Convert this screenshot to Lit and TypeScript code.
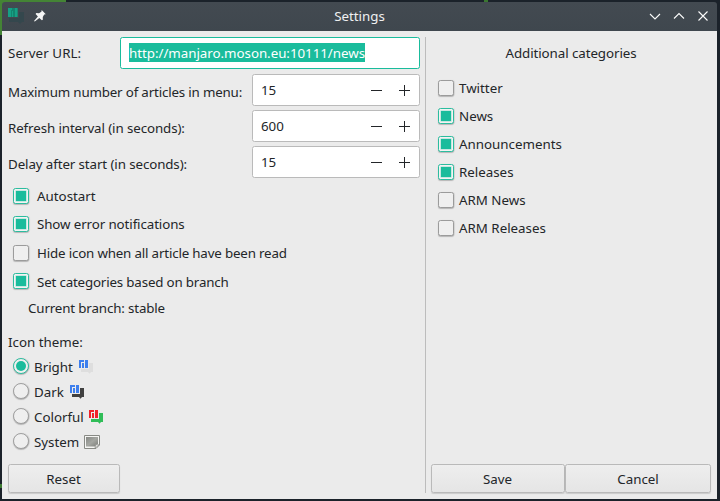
import { LitElement, html, css } from "lit";
import { customElement, property } from "lit/decorators.js";

@customElement("check-item")
class CheckItem extends LitElement {
  @property() label = "";
  @property({ type: Boolean }) checked = false;
  static styles = css`
    :host { display: flex; align-items: center; }
    .box {
      box-sizing: border-box; width: 16px; height: 16px; flex: none;
      border: 1px solid #9b9b9b; border-radius: 2.5px; background: #efefef;
      box-shadow: 0 1px 1px rgba(0, 0, 0, 0.22), 1px 0 1px rgba(0, 0, 0, 0.08);
      display: grid; place-items: center;
    }
    .on { border-color: #2bbd9f; background: #f3f3f3; }
    .on::after { content: ""; width: 10px; height: 10px; background: #1abc9c; box-shadow: 0 0 0 0.5px rgba(26, 188, 156, 0.4); }
    .text { margin-left: var(--gap, 5px); white-space: nowrap; transform: translateY(var(--drop, 0)); }
  `;
  render() {
    return html`<span class="box ${this.checked ? "on" : ""}"></span><span class="text">${this.label}</span>`;
  }
}

@customElement("radio-item")
class RadioItem extends LitElement {
  @property() label = "";
  @property({ type: Boolean }) checked = false;
  static styles = css`
    :host { display: flex; align-items: center; height: 25px; }
    .ring {
      box-sizing: border-box; width: 16px; height: 16px; flex: none; border-radius: 50%;
      border: 1px solid #a0a0a0; background: #efefef;
      box-shadow: 0 1px 1px rgba(0, 0, 0, 0.22), 1px 0 1px rgba(0, 0, 0, 0.1);
      display: grid; place-items: center;
    }
    .on { border-color: #2bbd9f; }
    .on::after { content: ""; width: 10px; height: 10px; border-radius: 50%; background: #1abc9c; }
    .text { margin: 2px 0 0 5px; width: var(--label-width); white-space: nowrap; }
    ::slotted(*) { margin-top: 3px; }
  `;
  render() {
    return html`<span class="ring ${this.checked ? "on" : ""}"></span><span class="text">${this.label}</span><slot></slot>`;
  }
}

@customElement("spin-box")
class SpinBox extends LitElement {
  @property() value = "";
  static styles = css`
    :host {
      display: flex; align-items: center; box-sizing: border-box; width: 168px; height: 32px; letter-spacing: 0;
      background: #fff; border: 1px solid #bababa; border-radius: 2.5px; padding: 0 8px;
    }
    span { flex: 1; }
    svg { display: block; }
    .minus { margin-right: 16px; }
  `;
  render() {
    return html`<span>${this.value}</span>
      <svg class="minus" width="12" height="12" shape-rendering="crispEdges"><path d="M0 6h11v1H0z" fill="#232629" /></svg>
      <svg width="12" height="12" shape-rendering="crispEdges"><path d="M0 6h11v1H0zM5 1h1v11H5z" fill="#232629" /></svg>`;
  }
}

const logo = (mark: string, bubble: string) => html`
  <svg width="15" height="14" viewBox="0 0 15 14">
    <path d="M10 3h4v9h-2l-1.500 1.700L9 12H2V9h8z" fill="${bubble}" />
    <path d="M0 0h5v2H2v6H0zM3 3h2v5H3zM6 0h3v8H6z" fill="${mark}" />
  </svg>`;

const pictureIcon = html`
  <svg width="16" height="14" viewBox="0 0 16 14">
    <defs><linearGradient id="g" x2="1" y2="1"><stop stop-color="#858783" /><stop offset=".5" stop-color="#a5a7a2" /><stop offset="1" stop-color="#7c7e79" /></linearGradient></defs>
    <path d="M.5.5h15v9.500l-3.500 3.500H.5z" fill="#f5f5f3" stroke="#888a85" />
    <path d="M2 2h12v6.500l-3 3H2z" fill="url(#g)" />
    <path d="M11 13.200l.6-3.600 3.700.2z" fill="#e5e5e2" stroke="#888a85" stroke-width=".7" />
  </svg>`;

@customElement("app-root")
class AppRoot extends LitElement {
  static styles = css`
    :host {
      display: block; box-sizing: border-box; width: 720px; height: 501px; padding: 2px 3px 2px 2px; overflow: hidden;
      background:
        linear-gradient(#448435, #448435) 0 0 / 2px 35px no-repeat,
        linear-gradient(#3c7931, #3c7931) 0 484px / 2px 4px no-repeat,
        linear-gradient(115deg, #448435 60px, #1d2427 61px) 0 0 / 66px 6px no-repeat,
        linear-gradient(#3a7730, #3a7730) 484px 0 / 4px 2px no-repeat,
        #1b222a;
      font: 13.333px/18px "Noto Sans", sans-serif; color: #232629;
    }
    .title {
      box-sizing: border-box; height: 29px; padding-bottom: 2px; display: grid; grid-template-columns: 1fr auto 1fr; align-items: center;
      background: linear-gradient(#434a51, #3f474e); color: #eff0f1; border-radius: 3px 3px 0 0;
    }
    .side { display: flex; align-items: flex-start; height: 27px; }
    .right { justify-content: flex-end; padding-right: 8px; gap: 12px; align-items: center; box-sizing: border-box; }
    svg { display: block; flex: none; }
    .app { margin: 5px 0 0 5px; }
    .pin { margin: 8px 0 0 10px; }
    .body {
      box-sizing: border-box; height: 468px; padding: 6px; background: #ebebeb;
      display: grid; grid-template-columns: 412px 1px 280px; column-gap: 5px;
    }
    .sep { background: #bcbcbc; }
    .col { display: flex; flex-direction: column; }
    .row { display: flex; justify-content: space-between; align-items: center; height: 32px; margin-bottom: 4px; }
    .row.url { margin-bottom: 5px; }
    .row.url > span { letter-spacing: 0.1px; }
    .spin span { margin-top: 4px; }
    .entry {
      box-sizing: border-box; width: 300px; height: 32px; border: 1px solid #1abc9c; border-radius: 2.5px;
      background: #fff; padding: 5px 8px;
    }
    .entry mark { display: inline-block; height: 19px; line-height: 20px; letter-spacing: -0.03px; background: #1abc9c; color: #fff; }
    .checks { display: grid; grid-template-rows: 28px 28px 29px 28px; padding-left: 5px; --gap: 8px; }
    .low { --drop: 1px; }
    .snug { letter-spacing: -0.1px; }
    .tight { letter-spacing: -0.17px; }
    .branch { margin: 4px 0 0 20px; letter-spacing: -0.14px; }
    .theme { margin: 16px 0 2px; }
    .radios { padding-left: 5px; }
    .bright { --label-width: 45px; }
    .dark { --label-width: 36px; }
    .colorful { --label-width: 55px; }
    .system { --label-width: 50px; }
    .button {
      box-sizing: border-box; height: 29px; border: 1px solid #b9b9b9; border-radius: 2.5px; text-align: center; line-height: 28px;
      padding-right: 1px;
      background: linear-gradient(#eeeeee, #e5e5e5); box-shadow: 0 1px 1px rgba(0, 0, 0, 0.14);
    }
    .button.wide { padding-right: 0; }
    .foot { margin-top: auto; }
    .reset { width: 112px; }
    .cats { display: grid; grid-auto-rows: 28px; padding-left: 7px; margin-top: 12px; }
    .heading { text-align: center; margin-top: 7px; letter-spacing: -0.07px; }
    .pair { display: grid; grid-template-columns: 134px 146px; }
  `;

  render() {
    return html`
      <div class="title">
        <div class="side">
          <svg class="app" width="17" height="17" viewBox="0 0 17 17">
            <path d="M12 5h5v10h-2l-2 2-2-2H2v-4h10z" fill="#34474d" />
            <path d="M1 1h9.500v9H1z" fill="#13856f" />
            <path d="M1 1h4v2H4v7H1zM5 4h1v6H5zM8 1h2.500v9H8z" fill="#16a085" />
          </svg>
          <svg class="pin" width="12" height="12" viewBox="0 0 12 12">
            <path d="M7.700 0L11.800 4.300 10.200 4.600 8.800 7 8.800 9.800 7.900 10.300 5.300 8 .8 11.600 0 11 3.900 6.600 1.600 4 2.300 3 5 3.200 7.400 1.700z" fill="#f5f6f6" />
          </svg>
        </div>
        <span>Settings</span>
        <div class="side right">
          ${["M1 4l5 5 5-5", "M1 8.500l5-5 5 5", "M1.500 1.500l9 9m0-9l-9 9"].map(
            (d) => html`<svg width="12" height="12" viewBox="0 0 12 12"><path d="${d}" fill="none" stroke="#fcfcfc" stroke-width="1.1" /></svg>`
          )}
        </div>
      </div>
      <div class="body">
        <div class="col">
          <div class="row url"><span>Server URL:</span><div class="entry"><mark>http://manjaro.moson.eu:10111/news</mark></div></div>
          ${[
            ["Maximum number of articles in menu:", "15", "tight"],
            ["Refresh interval (in seconds):", "600", "snug"],
            ["Delay after start (in seconds):", "15", "snug"],
          ].map(([l, v, c]) => html`<div class="row spin"><span class=${c}>${l}</span><spin-box value=${v}></spin-box></div>`)}
          <div class="checks">
            <check-item label="Autostart" checked></check-item>
            <check-item class="snug" label="Show error notifications" checked></check-item>
            <check-item class="tight" label="Hide icon when all article have been read"></check-item>
            <check-item class="tight low" label="Set categories based on branch" checked></check-item>
          </div>
          <div class="branch">Current branch: stable</div>
          <div class="theme">Icon theme:</div>
          <div class="radios">
            <radio-item class="bright" label="Bright" checked>${logo("#3d7fee", "#dedede")}</radio-item>
            <radio-item class="dark" label="Dark">${logo("#3d7fee", "#404040")}</radio-item>
            <radio-item class="colorful" label="Colorful">${logo("#f02329", "#30bd58")}</radio-item>
            <radio-item class="system" label="System">${pictureIcon}</radio-item>
          </div>
          <div class="button foot reset">Reset</div>
        </div>
        <div class="sep"></div>
        <div class="col">
          <div class="heading">Additional categories</div>
          <div class="cats">
            ${([["Twitter", false], ["News", true], ["Announcements", true], ["Releases", true], ["ARM News", false], ["ARM Releases", false]] as [string, boolean][]).map(
              ([l, c]) => html`<check-item label=${l} ?checked=${c}></check-item>`
            )}
          </div>
          <div class="pair foot"><div class="button">Save</div><div class="button wide">Cancel</div></div>
        </div>
      </div>
    `;
  }
}
